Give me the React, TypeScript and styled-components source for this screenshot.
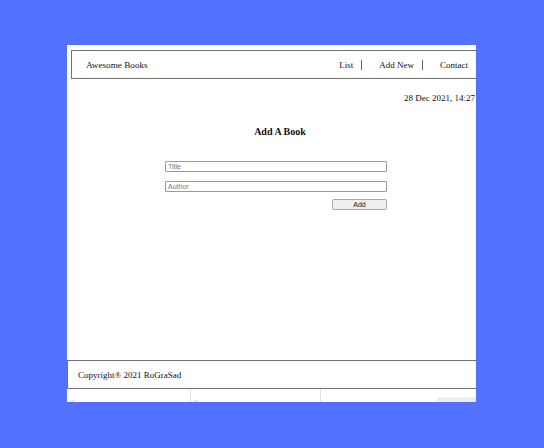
import React from 'react';
import styled, { createGlobalStyle } from 'styled-components';

const GlobalStyle = createGlobalStyle`
  html, body {
    margin: 0;
    padding: 0;
    background: #5271ff;
  }
  body {
    font-family: 'Liberation Serif', 'Times New Roman', serif;
  }
`;

const Stage = styled.div`
  width: 544px;
  height: 448px;
  padding: 45px 0 0 67px;
  box-sizing: border-box;
`;

const Panel = styled.div`
  width: 409px;
  height: 357px;
  background: #fff;
  overflow: hidden;
`;

const Page = styled.div`
  width: 426px;
  height: 100%;
  display: flex;
  flex-direction: column;
  color: #111;
`;

const Header = styled.header`
  margin: 5px 4px 0 4px;
  height: 29px;
  box-sizing: border-box;
  border: 1px solid #707070;
  display: flex;
  align-items: center;
  justify-content: space-between;
  padding: 0 20px 0 14px;
  font-size: 9px;
  flex-shrink: 0;
`;

const Brand = styled.span`
  font-size: 9.2px;
`;

const Nav = styled.nav`
  display: flex;
  align-items: center;
`;

const NavItem = styled.span<{ $last?: boolean }>`
  line-height: 10px;
  padding-right: ${({ $last }) => ($last ? '0' : '8px')};
  margin-right: ${({ $last }) => ($last ? '0' : '17px')};
  border-right: ${({ $last }) => ($last ? 'none' : '1px solid #666')};
`;

const Main = styled.main`
  flex: 1;
  display: flex;
  flex-direction: column;
`;

const DateRow = styled.div`
  margin-top: 13px;
  padding-right: 18px;
  text-align: right;
  font-size: 9px;
  line-height: 12px;
  white-space: nowrap;
`;

const Heading = styled.h2`
  margin: 22px 0 0;
  text-align: center;
  font-size: 10px;
  line-height: 12px;
  font-weight: bold;
`;

const Form = styled.form`
  margin: 23px 0 0 98px;
  width: 222px;
  display: flex;
  flex-direction: column;
  align-items: flex-end;
`;

const Input = styled.input<{ $gap?: number }>`
  width: 100%;
  height: 11px;
  box-sizing: border-box;
  margin: ${({ $gap }) => $gap ?? 0}px 0 0;
  padding: 0 2px;
  border: 1px solid #9a9a9a;
  border-radius: 1px;
  font-family: 'Liberation Sans', Arial, sans-serif;
  font-size: 7px;
  outline: none;
  &::placeholder {
    color: #777;
  }
`;

const Button = styled.button`
  margin-top: 7px;
  width: 55px;
  height: 11px;
  box-sizing: border-box;
  padding: 0;
  background: #efefef;
  border: 1px solid #a8a8a8;
  border-radius: 2px;
  font-family: 'Liberation Sans', Arial, sans-serif;
  font-size: 7px;
  line-height: 9px;
  color: #111;
`;

const Footer = styled.footer`
  height: 29px;
  box-sizing: border-box;
  border: 1px solid #707070;
  display: flex;
  align-items: center;
  padding-left: 10px;
  font-size: 9px;
  flex-shrink: 0;
`;

const Strip = styled.div`
  height: 13px;
  display: flex;
  flex-shrink: 0;
`;

const StripCell = styled.div<{ $w: number; $line?: boolean }>`
  width: ${({ $w }) => $w}px;
  border-right: ${({ $line }) => ($line ? '1px solid #e2e2e2' : 'none')};
  display: flex;
  align-items: flex-end;
  padding-left: 3px;
  box-sizing: border-box;
`;

const Dot = styled.span`
  width: 5px;
  height: 2px;
  border-radius: 3px 3px 0 0;
  background: #e6e6e6;
`;

const GreyTab = styled.div`
  margin-left: 116px;
  margin-top: 8px;
  width: 50px;
  height: 5px;
  background: #eeeeee;
  border-radius: 2px 0 0 0;
`;

export default function App() {
  return (
    <>
      <GlobalStyle />
      <Stage>
        <Panel>
          <Page>
            <Header>
              <Brand>Awesome Books</Brand>
              <Nav>
                <NavItem>List</NavItem>
                <NavItem>Add New</NavItem>
                <NavItem $last>Contact</NavItem>
              </Nav>
            </Header>
            <Main>
              <DateRow>28 Dec 2021, 14:27</DateRow>
              <Heading>Add A Book</Heading>
              <Form onSubmit={(e) => e.preventDefault()}>
                <Input placeholder="Title" />
                <Input placeholder="Author" $gap={9} />
                <Button type="submit">Add</Button>
              </Form>
            </Main>
            <Footer>Copyright® 2021 RoGraSad</Footer>
            <Strip>
              <StripCell $w={124} $line>
                <Dot />
              </StripCell>
              <StripCell $w={130} $line>
                <Dot />
              </StripCell>
              <GreyTab />
            </Strip>
          </Page>
        </Panel>
      </Stage>
    </>
  );
}
